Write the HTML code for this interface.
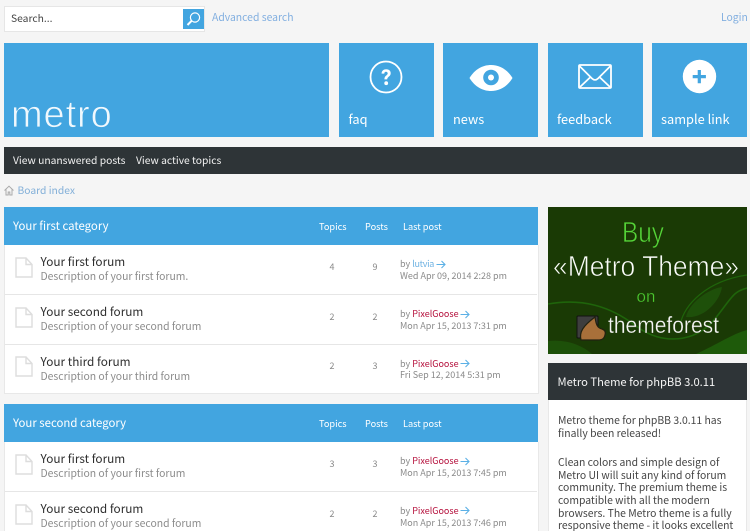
<!DOCTYPE html>
<html><head><meta charset="utf-8">
<style>
html,body{margin:0;padding:0;width:750px;height:531px;overflow:hidden;background:#f5f5f5;}
body{position:relative;font-family:"Noto Sans CJK SC","Liberation Sans",sans-serif;color:#333;}
div,span,svg{position:absolute;white-space:nowrap;}
i{font-style:normal;position:static;}
.blue{background:#42a5e0;}
.tile{top:43px;width:95px;height:94px;background:#42a5e0;}
.tl{color:#fff;font-size:12.8px;line-height:16px;top:111px;}
.hd{left:4px;width:534px;height:38px;background:#42a5e0;}
.ht{color:#fff;font-size:11.4px;line-height:14px;}
.hs{color:#fff;font-size:9.2px;line-height:12px;}
.panel{left:4px;width:533px;background:#fff;border:solid #e8e8e8;border-width:0 1px 1px 1px;}
.sep{left:5px;width:532px;height:1px;background:#e6e6e6;}
.ft{left:40.5px;color:#2e2e2e;font-size:11.8px;line-height:14px;}
.fd{left:40.5px;color:#8b8b8b;font-size:10.4px;line-height:13px;}
.n{color:#8a8a8a;font-size:9px;line-height:11px;width:20px;text-align:center;}
.by{left:400px;color:#8a8a8a;font-size:9px;line-height:11px;}
.dt{left:400px;color:#8a8a8a;font-size:9px;line-height:11px;}
.u{color:#b5103c;}
.lb{color:#6fb2e2;}
.side{color:#444;font-size:10.4px;line-height:13px;left:558px;}
</style></head><body>

<!-- search -->
<div style="left:4px;top:6px;width:199px;height:24px;background:#fff;border:1px solid #e6e6e6;"></div>
<div style="left:11px;top:11px;font-size:10.3px;line-height:13px;color:#444;">Search...</div>
<div class="blue" style="left:183px;top:9px;width:21px;height:20px;"></div>
<svg style="left:183px;top:9px" width="21" height="20" viewBox="0 0 21 20" fill="none" stroke="#fff"><circle cx="12" cy="8.500" r="4.600" stroke-width="1.200"/><path d="M8.600 11.800L4.500 16" stroke-width="2"/></svg>
<div style="left:212px;top:10px;font-size:10.4px;line-height:13px;color:#82afe0;">Advanced search</div>
<div style="left:721px;top:10px;font-size:10.4px;line-height:13px;color:#82afe0;">Login</div>

<!-- banner -->
<div class="blue" style="left:4px;top:43px;width:325px;height:94px;"></div>
<div style="left:11px;top:92px;font-family:'Liberation Sans',sans-serif;font-size:38px;line-height:46px;color:#f0f8fd;letter-spacing:.9px;-webkit-text-stroke:.8px #42a5e0;">metro</div>

<!-- tiles -->
<div class="tile" style="left:339px"></div>
<div class="tile" style="left:443px"></div>
<div class="tile" style="left:548px"></div>
<div class="tile" style="left:652px"></div>
<div class="tl" style="left:348.500px">faq</div>
<div class="tl" style="left:453px">news</div>
<div class="tl" style="left:557px">feedback</div>
<div class="tl" style="left:661px">sample link</div>

<svg style="left:369px;top:60px" width="34" height="34" viewBox="0 0 34 34"><circle cx="17" cy="17" r="15.500" fill="none" stroke="#fff" stroke-width="1.800"/><path d="M12.600 13.600c0-2.800 2-4.300 4.600-4.300s4.500 1.500 4.500 3.900c0 3.400-3.500 3.300-3.500 6.200h-2.800c0-4 3.300-3.800 3.300-6 0-1-.7-1.700-1.700-1.700-1.100 0-1.700.8-1.700 1.900z" fill="#fff"/><circle cx="17.200" cy="23.200" r="1.900" fill="#fff"/></svg>
<svg style="left:469px;top:64px" width="44" height="28" viewBox="0 0 44 28"><path d="M.5 14C6 5 14 1 22 1s16 4 21.500 13C38 23 30 27 22 27S6 23 .5 14z" fill="#fff"/><circle cx="22" cy="13.500" r="7.800" fill="#42a5e0"/><circle cx="22" cy="13.500" r="3" fill="#fff"/></svg>
<svg style="left:578px;top:64px" width="34" height="26" viewBox="0 0 34 26" fill="none" stroke="#fff"><rect x="1" y="1" width="32" height="23" rx="1" stroke-width="1.800"/><path d="M1.500 2L14 14.500c1.800 1.800 4.200 1.800 6 0L32.500 2M2 23l10-9.500M32 23l-10-9.500" stroke-width="1.700"/></svg>
<svg style="left:682px;top:59px" width="35" height="35" viewBox="0 0 35 35"><circle cx="17.500" cy="17.500" r="16.700" fill="#fff"/><path d="M15.700 11h3.200v5h5v3.200h-5v5h-3.200v-5h-5V16h5z" fill="#42a5e0"/></svg>

<!-- nav -->
<div style="left:4px;top:147px;width:743px;height:27px;background:#2e3437;"></div>
<div style="left:13px;top:153px;font-size:10.300px;line-height:13px;color:#f2f2f2;">View unanswered posts</div>
<div style="left:136px;top:153px;font-size:10.300px;line-height:13px;color:#f2f2f2;">View active topics</div>

<!-- breadcrumb -->
<svg style="left:4px;top:185px" width="10" height="11" viewBox="0 0 10 11" fill="none" stroke="#aaa" stroke-width="1"><path d="M.5 5.500L5 1.200l4.500 4.300M2 4.500V10h2.200V7h1.600v3H8V4.500"/></svg>
<div style="left:17.500px;top:183px;font-size:10.300px;line-height:13px;color:#82afd8;">Board index</div>

<!-- cat 1 -->
<div class="hd" style="top:207px"></div>
<div class="ht" style="left:13px;top:219px">Your first category</div>
<div class="hs" style="left:319px;top:220px">Topics</div>
<div class="hs" style="left:365px;top:220px">Posts</div>
<div class="hs" style="left:403px;top:220px">Last post</div>
<div class="panel" style="top:245px;height:148px"></div>
<div class="sep" style="top:294px"></div>
<div class="sep" style="top:344px"></div>

<svg style="left:15px;top:257px" width="18" height="21" viewBox="0 0 18 21" fill="none" stroke="#ddd" stroke-width="1.400"><path d="M1 1h10l6 6.500V20H1zM11 1v6.500h6"/></svg>
<div class="ft" style="top:255px">Your first forum</div>
<div class="fd" style="top:269px">Description of your first forum.</div>
<div class="n" style="left:322px;top:261px">4</div><div class="n" style="left:365px;top:261px">9</div>
<div class="by" style="top:258px">by <i class="lb" style="letter-spacing:-.3px">lutvia</i></div>
<svg style="left:436px;top:260px" width="10" height="9" viewBox="0 0 10 9" fill="none" stroke="#5bb0e6" stroke-width="1.100"><path d="M.5 4.500h8.500M5.500 1l3.500 3.500L5.500 8"/></svg>
<div class="dt" style="top:270px">Wed Apr 09, 2014 2:28 pm</div>

<svg style="left:15px;top:307px" width="18" height="21" viewBox="0 0 18 21" fill="none" stroke="#ddd" stroke-width="1.400"><path d="M1 1h10l6 6.500V20H1zM11 1v6.500h6"/></svg>
<div class="ft" style="top:305px">Your second forum</div>
<div class="fd" style="top:319px">Description of your second forum</div>
<div class="n" style="left:322px;top:311px">2</div><div class="n" style="left:365px;top:311px">2</div>
<div class="by" style="top:308px">by <i class="u">PixelGoose</i></div>
<svg style="left:460px;top:310px" width="10" height="9" viewBox="0 0 10 9" fill="none" stroke="#5bb0e6" stroke-width="1.100"><path d="M.5 4.500h8.500M5.500 1l3.500 3.500L5.500 8"/></svg>
<div class="dt" style="top:320px">Mon Apr 15, 2013 7:31 pm</div>

<svg style="left:15px;top:356px" width="18" height="21" viewBox="0 0 18 21" fill="none" stroke="#ddd" stroke-width="1.400"><path d="M1 1h10l6 6.500V20H1zM11 1v6.500h6"/></svg>
<div class="ft" style="top:355px">Your third forum</div>
<div class="fd" style="top:369px">Description of your third forum</div>
<div class="n" style="left:322px;top:360px">2</div><div class="n" style="left:365px;top:360px">3</div>
<div class="by" style="top:358px">by <i class="u">PixelGoose</i></div>
<svg style="left:460px;top:359px" width="10" height="9" viewBox="0 0 10 9" fill="none" stroke="#5bb0e6" stroke-width="1.100"><path d="M.5 4.500h8.500M5.500 1l3.500 3.500L5.500 8"/></svg>
<div class="dt" style="top:369px">Fri Sep 12, 2014 5:31 pm</div>

<!-- cat 2 -->
<div class="hd" style="top:404px"></div>
<div class="ht" style="left:13px;top:416px">Your second category</div>
<div class="hs" style="left:319px;top:417px">Topics</div>
<div class="hs" style="left:365px;top:417px">Posts</div>
<div class="hs" style="left:403px;top:417px">Last post</div>
<div class="panel" style="top:442px;height:100px"></div>
<div class="sep" style="top:491px"></div>

<svg style="left:15px;top:454px" width="18" height="21" viewBox="0 0 18 21" fill="none" stroke="#ddd" stroke-width="1.400"><path d="M1 1h10l6 6.500V20H1zM11 1v6.500h6"/></svg>
<div class="ft" style="top:452px">Your first forum</div>
<div class="fd" style="top:466px">Description of your first forum</div>
<div class="n" style="left:322px;top:458px">3</div><div class="n" style="left:365px;top:458px">3</div>
<div class="by" style="top:455px">by <i class="u">PixelGoose</i></div>
<svg style="left:460px;top:457px" width="10" height="9" viewBox="0 0 10 9" fill="none" stroke="#5bb0e6" stroke-width="1.100"><path d="M.5 4.500h8.500M5.500 1l3.500 3.500L5.500 8"/></svg>
<div class="dt" style="top:467px">Mon Apr 15, 2013 7:45 pm</div>

<svg style="left:15px;top:504px" width="18" height="21" viewBox="0 0 18 21" fill="none" stroke="#ddd" stroke-width="1.400"><path d="M1 1h10l6 6.500V20H1zM11 1v6.500h6"/></svg>
<div class="ft" style="top:502px">Your second forum</div>
<div class="fd" style="top:516px">Description of your second forum</div>
<div class="n" style="left:322px;top:508px">2</div><div class="n" style="left:365px;top:508px">2</div>
<div class="by" style="top:505px">by <i class="u">PixelGoose</i></div>
<svg style="left:460px;top:506px" width="10" height="9" viewBox="0 0 10 9" fill="none" stroke="#5bb0e6" stroke-width="1.100"><path d="M.5 4.500h8.500M5.500 1l3.500 3.500L5.500 8"/></svg>
<div class="dt" style="top:517px">Mon Apr 15, 2013 7:46 pm</div>

<!-- ad -->
<svg style="left:548px;top:207px" width="199" height="147" viewBox="0 0 199 147">
<rect width="199" height="147" fill="#1a3a05"/>
<path d="M138 110c3-14 22-28 36-30-2 14-18 32-36 30z" fill="#1e500a"/>
<path d="M0 134c18-2 34 4 44 13H0z" fill="#1d5009"/>
<path d="M148 147c22-10 36-20 51-24v24z" fill="#1e5a0a"/>
<path d="M0 97c34-6 62 2 88 22s60 16 78-6 18-28 33-32" fill="none" stroke="#1f640b" stroke-width="1.600"/>
<path d="M132 118c4-20 26-44 67-50" fill="none" stroke="#1f640b" stroke-width="1.200"/>
<text x="95" y="35" text-anchor="middle" font-family="Liberation Sans,sans-serif" font-size="29" fill="#55d438" stroke="#1a3a05" stroke-width=".7" textLength="42" lengthAdjust="spacingAndGlyphs">Buy</text>
<text x="98" y="69" text-anchor="middle" font-family="Liberation Sans,sans-serif" font-size="29" fill="#fafcfa" stroke="#1a3a05" stroke-width=".7" textLength="186" lengthAdjust="spacingAndGlyphs">«Metro Theme»</text>
<text x="98" y="95" text-anchor="middle" font-family="Liberation Sans,sans-serif" font-size="17" fill="#4cc830" stroke="#1a3a05" stroke-width=".3">on</text>
<rect x="29" y="109" width="21" height="22" rx="1" fill="#3e3e3e" stroke="#111"/>
<path d="M33 133c-2-8 2-14 14-23 1 7 2 11 7 12 3 1 4 3 3 6-1 4-3 5-7 5z" fill="#a8703a" stroke="#221" stroke-width="1.200"/>
<text x="60" y="126" font-family="Liberation Sans,sans-serif" font-size="23" fill="#f4f4f4" stroke="#1a3a05" stroke-width=".3" textLength="111" lengthAdjust="spacingAndGlyphs">themeforest</text>
</svg>

<!-- side block -->
<div style="left:548px;top:363px;width:199px;height:37px;background:#2e3437;"></div>
<div style="left:557.500px;top:376px;font-size:11.200px;line-height:13px;color:#f5f5f5;">Metro Theme for phpBB 3.0.11</div>
<div style="left:548px;top:400px;width:197px;height:140px;background:#fff;border:1px solid #e8e8e8;border-top:0;"></div>
<div class="side" style="top:413px">Metro theme for phpBB 3.0.11 has</div>
<div class="side" style="top:426px">finally been released!</div>
<div class="side" style="top:455px">Clean colors and simple design of</div>
<div class="side" style="top:467.500px">Metro UI will suit any kind of forum</div>
<div class="side" style="top:480px">community. The premium theme is</div>
<div class="side" style="top:493px">compatible with all the modern</div>
<div class="side" style="top:505.500px">browsers. The Metro theme is a fully</div>
<div class="side" style="top:518px">responsive theme - it looks excellent</div>

</body></html>
